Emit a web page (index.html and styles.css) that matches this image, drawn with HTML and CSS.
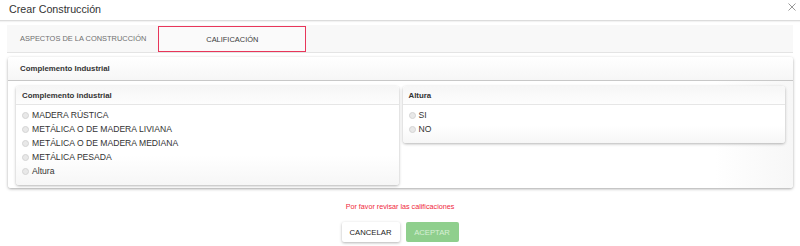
FILE: index.html
```html
<!DOCTYPE html>
<html lang="es">
<head>
  <meta charset="UTF-8">
  <title>Crear Construcción</title>
  <link rel="stylesheet" href="styles.css">
</head>
<body>
<div class="modal">
  <div class="modal-header">
    <h1>Crear Construcción</h1>
    <button class="close-button" aria-label="Cerrar">
      <svg width="8" height="8" viewBox="0 0 8 8"><path d="M0.5 0.5L7.5 7.5M7.5 0.5L0.5 7.5" stroke="#999" stroke-width="1"/></svg>
    </button>
  </div>

  <div class="tabs">
    <div class="tab">ASPECTOS DE LA CONSTRUCCIÓN</div>
    <div class="tab active">CALIFICACIÓN</div>
  </div>

  <div class="panel">
    <div class="panel-heading">Complemento Industrial</div>
    <div class="panel-body">
      <div class="card">
        <div class="card-heading">Complemento industrial</div>
        <ul class="options">
          <li><span class="radio"></span>MADERA RÚSTICA</li>
          <li><span class="radio"></span>METÁLICA O DE MADERA LIVIANA</li>
          <li><span class="radio"></span>METÁLICA O DE MADERA MEDIANA</li>
          <li><span class="radio"></span>METÁLICA PESADA</li>
          <li><span class="radio"></span>Altura</li>
        </ul>
      </div>
      <div class="card">
        <div class="card-heading">Altura</div>
        <ul class="options">
          <li><span class="radio"></span>SI</li>
          <li><span class="radio"></span>NO</li>
        </ul>
      </div>
    </div>
  </div>

  <p class="error">Por favor revisar las calificaciones</p>

  <div class="modal-buttons">
    <button class="cancel-button">CANCELAR</button>
    <button class="accept-button" disabled>ACEPTAR</button>
  </div>
</div>
</body>
</html>
```

FILE: styles.css
```css
body {
  margin: 0;
  font-family: 'Liberation Sans', Arial, sans-serif;
  background: #fff;
  color: #333;
}

.modal {
  width: 800px;
  height: 246px;
}

.modal-header {
  height: 20px;
  display: flex;
  align-items: center;
  justify-content: space-between;
  padding: 0 3px 0 9px;
  border-bottom: 1px solid #dcdcdc;
  box-shadow: 0 1px 1px rgba(0,0,0,0.05);
}

.modal-header h1 {
  margin: 0;
  font-size: 10.7px;
  font-weight: normal;
  color: #333;
  padding-bottom: 3px;
}

.close-button {
  background: none;
  border: none;
  padding: 0;
  width: 9px;
  height: 9px;
  margin-bottom: 5px;
  display: flex;
}

.tabs {
  margin: 4px 7px 0;
  height: 27px;
  display: flex;
  background: #f8f8f8;
  border-bottom: 1px solid #e4e4e4;
}

.tab {
  font-size: 7.45px;
  color: #6f6f6f;
  display: flex;
  align-items: center;
  padding: 0 12px 0 13px;
}

.tab.active {
  color: #3a3a3a;
  width: 146px;
  height: 24px;
  padding: 0;
  justify-content: center;
  border: 1px solid #e8365a;
  margin-top: 1px;
  background: #fafafa;
}

.panel {
  margin: 4px 7px 0 8px;
  border-radius: 3px;
  box-shadow: 0 1px 3px rgba(0,0,0,0.35);
  background: linear-gradient(to right, #fff 90%, #f7f7f7);
}

.panel-heading {
  height: 23px;
  display: flex;
  align-items: center;
  padding-left: 12px;
  font-size: 7.85px;
  font-weight: bold;
  border-bottom: 1px solid #c8c8c8;
  background: linear-gradient(#fff, #f6f6f6);
  border-radius: 3px 3px 0 0;
}

.panel-body {
  display: flex;
  align-items: flex-start;
  gap: 4px;
  padding: 5px 8px 3px;
}

.card {
  flex: 1;
  border-radius: 3px;
  box-shadow: 0 1px 3px rgba(0,0,0,0.3);
  background: linear-gradient(#fff 70%, #f6f6f6);
}

.card-heading {
  height: 18px;
  display: flex;
  align-items: center;
  padding-left: 6px;
  font-size: 7.85px;
  font-weight: bold;
  border-bottom: 1px solid #e6e6e6;
  background: linear-gradient(#f6f6f6, #fdfdfd);
  border-radius: 3px 3px 0 0;
}

.options {
  list-style: none;
  margin: 0;
  padding: 3px 0 7px 6px;
}

.options li {
  height: 14px;
  display: flex;
  align-items: center;
  font-size: 8.6px;
  color: #333;
}

.radio {
  width: 5px;
  height: 5px;
  border-radius: 50%;
  border: 0.5px solid #d4d4d4;
  background: #e8e8e8;
  margin-right: 3px;
}

.error {
  margin: 14px 0 0;
  text-align: center;
  font-size: 7.2px;
  color: #f0283c;
}

.modal-buttons {
  display: flex;
  justify-content: center;
  gap: 6px;
  margin-top: 11px;
}

.modal-buttons button {
  height: 20px;
  border: none;
  border-radius: 2px;
  font-family: 'Liberation Sans', Arial, sans-serif;
  font-size: 7.7px;
  padding: 0;
}

.cancel-button {
  width: 58px;
  background: #fff;
  color: #222;
  box-shadow: 0 1px 3px rgba(0,0,0,0.3);
}

.accept-button {
  width: 53px;
  background: #8fcf8d;
  color: #d8f0d6;
}
```
